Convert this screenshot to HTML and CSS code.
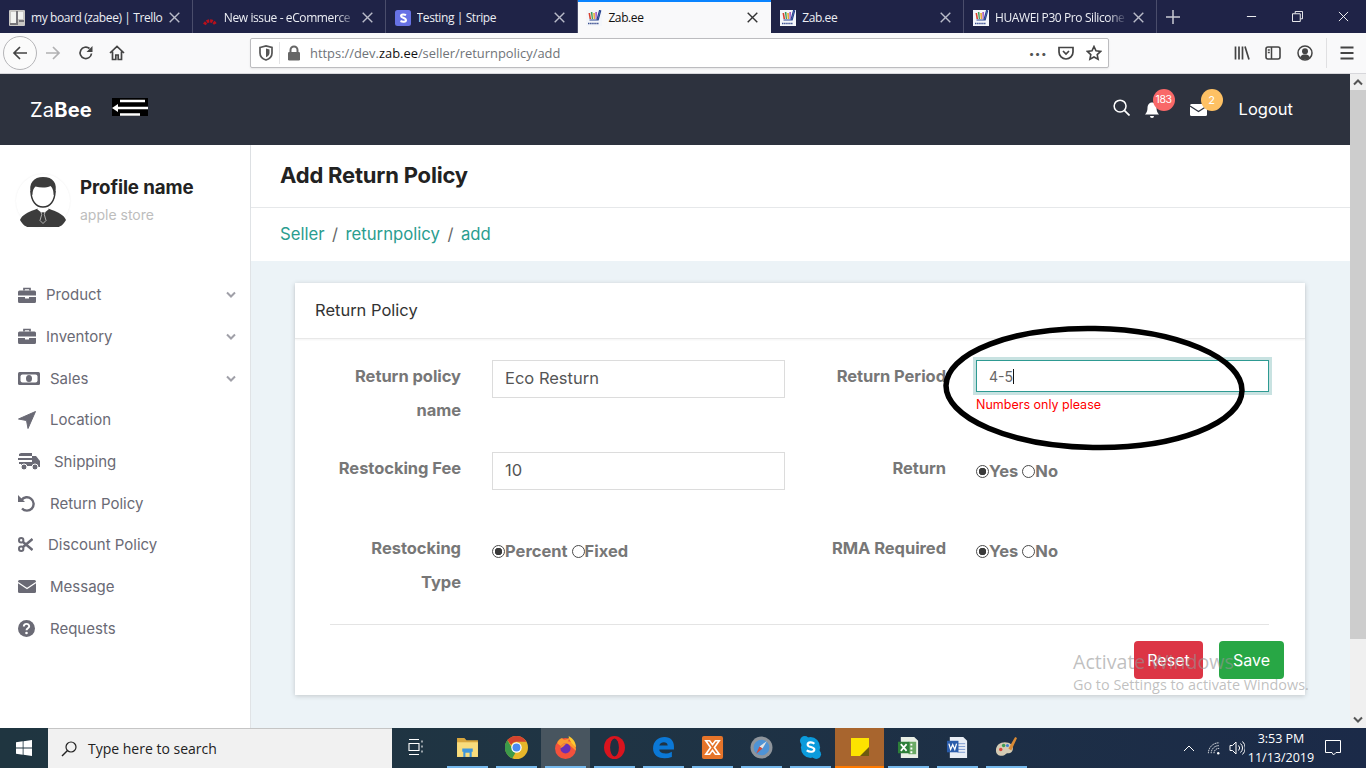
FILE: index.html
```html
<!DOCTYPE html>
<html lang="en">
<head>
<meta charset="utf-8">
<title>Zab.ee</title>
<link rel="stylesheet" href="styles.css">
</head>
<body>
<div class="screen">
  <div class="tabbar">
    <div class="tab"><svg class="fav" viewBox="0 0 16 16"><rect width="16" height="16" rx="1" fill="#c9c7c4"/><path d="M2 2h5v11H2zM9 2h5v7H9z" fill="#f2f2f0"/><path d="M7 1h2v14H7zM1 13h6v2H1zM10 10h5v2h-5z" fill="#77757a"/></svg><span class="tab-label">my board (zabee) | Trello</span><svg class="tab-x"><use href="#i-x"/></svg></div>
    <div class="tab"><svg class="fav" viewBox="0 0 16 16"><path d="M2.500 14.500A6 6 0 0 1 13.500 14.500" fill="none" stroke="#b8101c" stroke-width="3.200" stroke-dasharray="2.600 .9"/></svg><span class="tab-label tab-fade">New issue - eCommerce</span><svg class="tab-x"><use href="#i-x"/></svg></div>
    <div class="tab"><svg class="fav" viewBox="0 0 16 16"><rect width="16" height="16" rx="2.5" fill="#6772e5"/><path d="M11 5.2C9.5 4.3 6 4.2 6 6c0 2 5 1.500 5 4.200 0 1.800-3.500 1.800-5.500.8" fill="none" stroke="#fff" stroke-width="2"/></svg><span class="tab-label">Testing | Stripe</span><svg class="tab-x"><use href="#i-x"/></svg></div>
    <div class="tab tab-active"><svg class="fav" viewBox="0 0 16 16"><use href="#zabfav"/></svg><span class="tab-label">Zab.ee</span><svg class="tab-x"><use href="#i-x"/></svg></div>
    <div class="tab"><svg class="fav" viewBox="0 0 16 16"><use href="#zabfav"/></svg><span class="tab-label">Zab.ee</span><svg class="tab-x"><use href="#i-x"/></svg></div>
    <div class="tab"><svg class="fav" viewBox="0 0 16 16"><use href="#zabfav"/></svg><span class="tab-label tab-fade">HUAWEI P30 Pro Silicone Case</span><svg class="tab-x"><use href="#i-x"/></svg></div>
    <svg class="newtab" viewBox="0 0 14 14"><path d="M7 0v14M0 7h14" stroke="#c9cad4" stroke-width="1.500"/></svg>
    <div class="winctl">
      <svg viewBox="0 0 12 12"><path d="M1 6h10" stroke="#fff"/></svg>
      <svg viewBox="0 0 12 12"><path d="M3.500 2.500V.5h8v8h-2M.5 3h8.500v8.500H.5z" fill="none" stroke="#fff"/></svg>
      <svg viewBox="0 0 12 12"><path d="M1 1l10 10M11 1L1 11" stroke="#fff"/></svg>
    </div>
  </div>

  <div class="toolbar">
    <div class="backbtn"><svg viewBox="0 0 16 16"><path d="M15 8H2M8 2L2 8l6 6" class="tb-line"/></svg></div>
    <svg class="tb fwd" viewBox="0 0 16 16"><path d="M1 8h13M8 2l6 6-6 6" fill="none" stroke="#b1b1b3" stroke-width="1.700"/></svg>
    <svg class="tb reload" viewBox="0 0 16 16"><path d="M13.500 8.500A5.700 5.700 0 1 1 11.500 3.500" class="tb-line" stroke-width="2"/><path d="M14.500 1v6h-6z" fill="#444"/></svg>
    <svg class="tb home" viewBox="0 0 16 16"><path d="M1 8l7-6.500L15 8M3.500 6.500V14.500h3.300V10h2.400v4.500h3.300V6.500" class="tb-line" stroke-width="1.800"/></svg>
    <div class="urlbar">
      <svg class="ub shield" viewBox="0 0 14 16"><path d="M1 2.500L7 1l6 1.500V8c0 3.500-3 6-6 7-3-1-6-3.500-6-7z" fill="none" stroke="#555" stroke-width="1.700"/><path d="M7 3.500l3.500 1V8c0 1.800-1.500 3.300-3.500 4.300z" fill="#555"/></svg>
      <span class="ub-sep"></span>
      <svg class="ub lock" viewBox="0 0 14 16"><path d="M3.500 7V5a3.500 3.500 0 0 1 7 0v2" fill="none" stroke="#666" stroke-width="2"/><rect x="1" y="7" width="12" height="8.500" rx="1.200" fill="#666"/></svg>
      <span class="url">https://dev.<b>zab.ee</b>/seller/returnpolicy/add</span>
      <span class="dots">•••</span>
      <svg class="ub pocket" viewBox="0 0 16 16"><path d="M1 2.500h14V7A7 7 0 0 1 1 7z" fill="none" stroke="#444" stroke-width="1.700"/><path d="M5 6l3 3 3-3" fill="none" stroke="#444" stroke-width="1.700"/></svg>
      <svg class="ub star" viewBox="0 0 16 16"><path d="M8 1.500l2 4.300 4.700.6-3.500 3.200.9 4.700L8 12l-4.100 2.300.9-4.700L1.300 6.400 6 5.800z" fill="none" stroke="#444" stroke-width="1.600"/></svg>
    </div>
    <svg class="tb lib" viewBox="0 0 16 16"><path d="M1.500 1.500v13M5 1.500v13M8.500 1.500v13M11 1.500l4 13" stroke="#444" stroke-width="1.700" fill="none"/></svg>
    <svg class="tb side" viewBox="0 0 16 16"><rect x="1" y="2" width="14" height="12" rx="2" fill="none" stroke="#444" stroke-width="1.600"/><path d="M6.500 2v12M2.800 5h2M2.800 7.500h2" stroke="#444" stroke-width="1.500"/></svg>
    <svg class="tb acct" viewBox="0 0 16 16"><circle cx="8" cy="8" r="7" fill="none" stroke="#444" stroke-width="1.500"/><circle cx="8" cy="6.300" r="3" fill="#444"/><path d="M3 12.500c1-2.500 3-3 5-3s4 .5 5 3a7 7 0 0 1-10 0z" fill="#444"/></svg>
    <span class="tb-sep"></span>
    <svg class="tb menu" viewBox="0 0 16 16"><path d="M1.500 2.500h13M1.500 8h13M1.500 13.500h13" stroke="#444" stroke-width="1.800"/></svg>
  </div>

  <div class="viewport">
    <div class="page">
      <header class="topbar">
        <div class="logo">Za<b>Bee</b></div>
        <div class="toggle"><svg viewBox="0 0 36 18"><path d="M3 10h33M8 3h25M8 16.500h20" stroke="#fff" stroke-width="2.400"/><path d="M0 10l6-4v8z" fill="#fff"/></svg></div>
        <svg class="top-search" viewBox="0 0 18 18"><circle cx="7.500" cy="7.500" r="6.300" fill="none" stroke="#fff" stroke-width="1.600"/><path d="M12 12l5.500 5.500" stroke="#fff" stroke-width="1.800"/></svg>
        <div class="top-icon bell">
          <svg viewBox="0 0 16 16"><path d="M8 .5c3 0 4.500 2.500 4.500 5.500 0 3 1 5 2.500 6.500H1C2.500 11 3.500 9 3.500 6 3.500 3 5 .5 8 .5z" fill="#fff"/><path d="M6 14h4a2 2 0 0 1-4 0z" fill="#fff"/></svg>
          <span class="badge badge-red">183</span>
        </div>
        <div class="top-icon mail">
          <svg viewBox="0 0 17 12"><rect width="17" height="12" rx="1.500" fill="#fff"/><path d="M0 2l8.500 5.500L17 2" fill="none" stroke="#2d323e" stroke-width="1.200"/></svg>
          <span class="badge badge-amber">2</span>
        </div>
        <span class="logout">Logout</span>
      </header>

      <div class="below">
        <aside class="sidebar">
          <div class="profile">
            <div class="avatar">
              <svg viewBox="0 0 54 54"><path d="M4 46c2-5 8-8 14-10l5-2 4 4 4-4 5 2c6 2 12 5 14 10-3 5-6 7-8 7H12c-2 0-5-2-8-7z" fill="#3c3c3c"/><path d="M21 35l6 5 6-5-2-2h-8z" fill="#fff"/><path d="M25 38h4l-.7 2.500 1.700 6-3 3-3-3 1.700-6z" fill="#3c3c3c" stroke="#fff" stroke-width=".6"/><path d="M15 17c0 10 5 16 12 16s12-6 12-16" fill="#fff" stroke="#333" stroke-width="1.400"/><path d="M15 20c-3-11 3-17 12-17 10 0 15 6 12 17l-1.500 1c0-5-1-7-3-9-4 2-10 2-15 .5-2 2-3 4-3 8.500z" fill="#3c3c3c"/></svg>
            </div>
            <div class="who">
              <div class="who-name">Profile name</div>
              <div class="who-store">apple store</div>
            </div>
          </div>
          <nav class="nav">
            <div class="nav-item"><svg class="ni ni-case" viewBox="0 0 18 16"><use href="#i-case"/></svg><span class="t46">Product</span><svg class="chev" viewBox="0 0 10 7"><path d="M1 1.500l4 4 4-4" /></svg></div>
            <div class="nav-item"><svg class="ni ni-case" viewBox="0 0 18 16"><use href="#i-case"/></svg><span class="t46">Inventory</span><svg class="chev" viewBox="0 0 10 7"><path d="M1 1.500l4 4 4-4" /></svg></div>
            <div class="nav-item"><svg class="ni ni-cash" viewBox="0 0 22 13"><rect width="22" height="13" rx="1.500"/><rect x="2.500" y="2.500" width="17" height="8" rx="2" fill="#fff"/><ellipse cx="11" cy="6.500" rx="3" ry="3.500"/></svg><span class="t50">Sales</span><svg class="chev" viewBox="0 0 10 7"><path d="M1 1.500l4 4 4-4" /></svg></div>
            <div class="nav-item"><svg class="ni ni-arrow" viewBox="0 0 18 18"><path d="M17.500.5L10 17.500 8.500 9.500 .5 8z" stroke-linejoin="round" stroke="#6a6a75"/></svg><span class="t50">Location</span></div>
            <div class="nav-item"><svg class="ni ni-truck" viewBox="0 0 22 17"><path d="M3 0h11v3H1V1zM0 5h14v2H0zM1 9h13v2H1zM3 13h11V11H3z"/><path d="M14 3h4l4 5v6h-8z"/><circle cx="6" cy="14" r="3" stroke="#fff"/><circle cx="17" cy="14" r="3" stroke="#fff"/></svg><span class="t54">Shipping</span></div>
            <div class="nav-item"><svg class="ni ni-undo" viewBox="0 0 17 17"><path d="M3.500 5A6.700 6.700 0 1 1 4 13.500" fill="none" stroke="#6a6a75" stroke-width="2.400"/><path d="M0 0l7 7H0z"/></svg><span class="t50">Return Policy</span></div>
            <div class="nav-item"><svg class="ni ni-cut" viewBox="0 0 15 15"><circle cx="3.200" cy="3.200" r="2.200" fill="none" stroke="#6a6a75" stroke-width="2"/><circle cx="3.200" cy="11.800" r="2.200" fill="none" stroke="#6a6a75" stroke-width="2"/><path d="M5 5l9.500 8M5 10L14.500 2" stroke="#6a6a75" stroke-width="2.400"/></svg><span class="t48">Discount Policy</span></div>
            <div class="nav-item"><svg class="ni ni-mail" viewBox="0 0 18 13"><rect width="18" height="13" rx="1.500"/><path d="M0 2.500l9 6 9-6" fill="none" stroke="#fff" stroke-width="1.200"/></svg><span class="t50">Message</span></div>
            <div class="nav-item"><svg class="ni ni-help" viewBox="0 0 17 17"><circle cx="8.500" cy="8.500" r="8.500"/><path d="M5.800 6.500c0-3.500 5.400-3.500 5.400-.2 0 2-2.700 2-2.700 4" fill="none" stroke="#fff" stroke-width="1.900"/><circle cx="8.500" cy="13" r="1.300" fill="#fff"/></svg><span class="t50">Requests</span></div>
          </nav>
        </aside>

        <main class="main">
          <div class="titlebar"><h1>Add Return Policy</h1></div>
          <div class="crumbs"><a>Seller</a><i>/</i><a>returnpolicy</a><i>/</i><a>add</a></div>
          <div class="content">
            <section class="card">
              <div class="card-head">Return Policy</div>
              <div class="form">
                <label class="lbl lbl-a">Return policy<br>name</label>
                <div class="fld"><div class="input">Eco Resturn</div></div>
                <label class="lbl lbl-b">Return Period</label>
                <div class="fld">
                  <div class="input input-focus">4-5<span class="caret"></span></div>
                  <div class="err">Numbers only please</div>
                </div>

                <label class="lbl lbl-a">Restocking Fee</label>
                <div class="fld"><div class="input">10</div></div>
                <label class="lbl lbl-b">Return</label>
                <div class="radios"><input type="radio" name="r1" checked><span class="rt">Yes</span><input class="r2" type="radio" name="r1"><span class="rt">No</span></div>

                <label class="lbl lbl-a">Restocking<br>Type</label>
                <div class="radios"><input type="radio" name="r2" checked><span class="rt">Percent</span><input class="r2" type="radio" name="r2"><span class="rt">Fixed</span></div>
                <label class="lbl lbl-b">RMA Required</label>
                <div class="radios"><input type="radio" name="r3" checked><span class="rt">Yes</span><input class="r2" type="radio" name="r3"><span class="rt">No</span></div>
              </div>
              <div class="card-rule"></div>
              <div class="actions"><button class="btn btn-reset">Reset</button><button class="btn btn-save">Save</button></div>
            </section>
          </div>
        </main>
      </div>
    </div>
    <div class="scrollbar">
      <svg class="sb-arrow" viewBox="0 0 10 7"><path d="M1 5.500l4-4 4 4"/></svg>
      <div class="sb-thumb"></div>
      <svg class="sb-arrow sb-bottom" viewBox="0 0 10 7"><path d="M1 1.500l4 4 4-4"/></svg>
    </div>
    <svg class="scribble" viewBox="0 0 310 132"><ellipse cx="155" cy="66" rx="148" ry="59.500" transform="rotate(1 155 66)" fill="none" stroke="#000" stroke-width="5.500"/></svg>
    <div class="watermark"><div class="wm-1">Activate Windows</div><div class="wm-2">Go to Settings to activate Windows.</div></div>
  </div>

  <footer class="taskbar">
    <div class="start"><svg viewBox="0 0 16 16"><path d="M0 2.300l6.700-1v6.300H0zM7.500 1.200L16 0v7.600H7.500zM0 8.400h6.700v6.300l-6.700-1zM7.500 8.400H16V16l-8.500-1.200z" fill="#fff"/></svg></div>
    <div class="search"><svg viewBox="0 0 16 16"><circle cx="10" cy="6" r="5" fill="none" stroke="#222" stroke-width="1.200"/><path d="M6.500 9.500L1 15" stroke="#222" stroke-width="1.400"/></svg><span>Type here to search</span></div>
    <div class="tk tk-view"><svg viewBox="0 0 16 16"><path d="M1 .5h10M1 15.500h10M1 4.500h10v7H1zM14 1.500v2M14 6.500v2M14 11.500v2" fill="none" stroke="#fff" stroke-width="1.100"/></svg></div>
    <div class="tk on"><svg viewBox="0 0 22 22"><path d="M1 2h7l2 2h11v16H1z" fill="#d9a73e"/><path d="M1 6h20v14H1z" fill="#f9dc7c"/><path d="M6 12h10v3h-1v5h-8v-5H6z" fill="#3f96dc"/><path d="M9 16h4v4H9z" fill="#f9dc7c"/></svg></div>
    <div class="tk on"><svg viewBox="0 0 22 22"><circle cx="11" cy="11" r="11" fill="#e7b62a"/><path d="M11 0a11 11 0 0 1 9.500 5.500H11A5.500 5.500 0 0 0 6 8.500L2.300 4A11 11 0 0 1 11 0z" fill="#d4432f"/><path d="M2.300 4L7 12a5 5 0 0 0 3 4l-3 5.300A11 11 0 0 1 2.300 4z" fill="#3c9a4a"/><circle cx="11" cy="11" r="5" fill="#fff"/><circle cx="11" cy="11" r="3.800" fill="#4b8bf0"/></svg></div>
    <div class="tk on tk-active"><svg viewBox="0 0 22 22"><circle cx="11" cy="12" r="10" fill="#f4513c"/><path d="M3 7c1-3 3-5 5-5 0 2 4 2 6 0 0 0 1 2-1 3 5 0 8 4 8 9L14 8 7 10z" fill="#fc9a2f"/><path d="M14 0c4 2 7 6 7 11l-4-4c-1-2-3-4-3-7z" fill="#ffc92f"/><circle cx="11" cy="12" r="4.800" fill="#6a2fb5"/><path d="M6 12a5 5 0 0 1 6-5l-3 3z" fill="#f98a2e"/></svg></div>
    <div class="tk on"><svg viewBox="0 0 22 22"><ellipse cx="11" cy="11" rx="10" ry="11" fill="#d9141e"/><ellipse cx="11" cy="11" rx="4.200" ry="8.500" fill="#1f3040"/></svg></div>
    <div class="tk on"><svg viewBox="0 0 22 22"><path d="M1 12C1 5 6 1 12 1c6 0 9 4 9 9v3H7c0 4 7 5 12 2v5c-8 3-18 1-18-8zM7 9h8c0-4-7-4-8 0z" fill="#0b78d6"/></svg></div>
    <div class="tk on"><svg viewBox="0 0 22 24"><rect width="22" height="24" rx="2" fill="#e5742a"/><path d="M4 5l5 7-5 7h4l3-4 3 4h4l-5-7 5-7h-4l-3 4-3-4z" fill="none" stroke="#fff" stroke-width="1.700"/></svg></div>
    <div class="tk on"><svg viewBox="0 0 22 22"><circle cx="11" cy="11" r="10.500" fill="#8f959c"/><circle cx="11" cy="11" r="7.500" fill="#4e93d6"/><path d="M16 5l-7 5 3 2z" fill="#e4e4e4"/><path d="M6 17l3-7 3 2z" fill="#d44a3a"/></svg></div>
    <div class="tk on"><svg viewBox="0 0 22 24"><ellipse cx="11" cy="12" rx="10" ry="11" fill="#0b9bdc"/><circle cx="5" cy="5" r="5" fill="#0b9bdc"/><circle cx="17" cy="19" r="5" fill="#0b9bdc"/><path d="M15 8c-2-2-7-2-7 1 0 3 7 2 7 5 0 3-5 3-8 1" fill="none" stroke="#fff" stroke-width="2.200"/></svg></div>
    <div class="tk on tk-sticky"><svg viewBox="0 0 18 18"><path d="M0 0h18v18H0z" fill="#fde300"/><path d="M9 18l9-9v9z" fill="#6d5a10"/></svg></div>
    <div class="tk on"><svg viewBox="0 0 24 24"><path d="M4 1h14l4 4v18H4z" fill="#e9efe6"/><path d="M12 6h8v13h-8z" fill="#6aaa64"/><path d="M14 8h2v2h-2zM14 12h2v2h-2zM14 16h2v2h-2z" fill="#fff"/><rect x="1" y="6" width="12" height="12" fill="#2d7f39"/><path d="M4 8.500l6 7M10 8.500l-6 7" stroke="#fff" stroke-width="1.800"/></svg></div>
    <div class="tk on"><svg viewBox="0 0 24 24"><path d="M4 1h14l4 4v18H4z" fill="#e8edf5"/><path d="M12 8h8M12 11h8M12 14h8M12 17h8" stroke="#7c9ad0"/><rect x="1" y="5" width="12" height="12" fill="#2a5cab"/><path d="M3 8l1.800 6L7 9l2.200 5L11 8" fill="none" stroke="#fff" stroke-width="1.300"/></svg></div>
    <div class="tk on"><svg viewBox="0 0 24 24"><path d="M1 15C1 8 8 5 14 7c5 2 6 7 3 10-2 2-4 0-6 2-3 3-10 2-10-4z" fill="#d4cbb4"/><circle cx="6" cy="14" r="1.800" fill="#d8443a"/><circle cx="9" cy="10" r="1.800" fill="#3f9d52"/><circle cx="13" cy="10" r="1.600" fill="#3f7fd0"/><path d="M14 13L21 1l2 1-6 13z" fill="#d98a35"/></svg></div>
    <div class="tray">
      <svg class="tr-up" viewBox="0 0 12 7"><path d="M1 6l5-5 5 5" fill="none" stroke="#fff"/></svg>
      <svg class="tr-wifi" viewBox="0 0 16 16"><path d="M1.500 13A11 11 0 0 1 13 2M4.500 13A8 8 0 0 1 13 5M7.500 13A5 5 0 0 1 13 8" fill="none" stroke="#fff" stroke-dasharray="1.500 .7"/><circle cx="12" cy="13" r="1.300" fill="#fff"/></svg>
      <svg class="tr-vol" viewBox="0 0 16 16"><path d="M1 5.500h2.500L7 2v12L3.500 10.500H1z" fill="none" stroke="#fff"/><path d="M9.500 5.500a3.500 3.500 0 0 1 0 5M11.500 3.500a6 6 0 0 1 0 9M13.500 1.500a9 9 0 0 1 0 13" fill="none" stroke="#fff"/></svg>
      <div class="clock"><div>3:53 PM</div><div>11/13/2019</div></div>
      <svg class="tr-note" viewBox="0 0 16 16"><path d="M.5.5h15v12H11L8.500 15 7 12.500H.5z" fill="none" stroke="#fff"/></svg>
    </div>
  </footer>
</div>
<svg class="defs" aria-hidden="true">
  <symbol id="zabfav" viewBox="0 0 16 16"><rect width="16" height="16" fill="#f4f6fa"/><path d="M2.500 3h1.600l1 6H3.500z" fill="#d8402f"/><path d="M4.800 2h1.600l.6 7H5.800z" fill="#3e9e55"/><path d="M7.200 3h1.600l.2 6H7.700z" fill="#e8a72a"/><path d="M9.400 2h1.500L10.500 9H9.600z" fill="#9a3fb5"/><path d="M11 9.500L13.500 .5l1.200.3L12.200 10H3.500" fill="none" stroke="#24408f" stroke-width="1.100"/><path d="M2 13.500h11" stroke="#3a4f90" stroke-width="1.700" stroke-dasharray="1.500 .6"/></symbol>
  <symbol id="i-case" viewBox="0 0 18 16"><path d="M6 3.500V1.500h6v2" fill="none" stroke="#6a6a75" stroke-width="1.700"/><path d="M1.500 3.500h15A1.500 1.500 0 0 1 18 5v3.500H0V5a1.500 1.500 0 0 1 1.500-1.500zM0 10h7v1.500h4V10h7v4.500a1.500 1.500 0 0 1-1.500 1.500h-15A1.500 1.500 0 0 1 0 14.500z"/></symbol>
  <symbol id="i-x" viewBox="0 0 11 11"><path d="M.7.700l9.600 9.600M10.300.7L.7 10.300" fill="none" stroke="currentColor" stroke-width="1.400"/></symbol>
</svg>
</body>
</html>
```
FILE: styles.css
```css
* { box-sizing: border-box; }
html, body { margin: 0; height: 100%; overflow: hidden; }
body { font-family: "Inter", "Liberation Sans", sans-serif; color: #333; background: #fff; }
.defs { width: 0; height: 0; position: absolute; }
.screen { width: 1366px; height: 768px; display: flex; flex-direction: column; }

/* tab strip */
.tabbar { flex: none; height: 33px; background: #1f2347; display: flex; align-items: stretch; font-family: "Open Sans", "Liberation Sans", sans-serif; font-size: 12px; letter-spacing: -.4px; color: #eceef4; }
.tab { width: 192.800px; flex: none; display: flex; align-items: center; padding: 2px 12px 0 9px; border-right: 1px solid #4a4d6b; position: relative; }
.tab-active { background: #f9f9fa; color: #111; border-right: 0; padding-left: 8px; padding-right: 13px; }
.tab-active::before { content: ""; position: absolute; left: 0; right: 0; top: 0; height: 2px; background: #0a84ff; }
.fav { width: 16px; height: 16px; flex: none; margin-right: 6px; }
.tab-label { flex: 1; white-space: nowrap; overflow: hidden; min-width: 0; }
.tab-fade { -webkit-mask-image: linear-gradient(90deg, #000 86%, transparent 100%); mask-image: linear-gradient(90deg, #000 86%, transparent 100%); }
.tab-x { flex: none; width: 11px; height: 11px; color: #b9bbc9; margin-left: 6px; }
.tab-active .tab-x { color: #333; }
.newtab { width: 14px; height: 14px; flex: none; align-self: center; margin-left: 9px; }
.winctl { margin-left: auto; display: flex; align-items: center; gap: 35px; padding-right: 17px; }
.winctl svg { width: 11px; height: 11px; display: block; }

/* toolbar */
.toolbar { flex: none; height: 41px; background: #f9f9fa; border-bottom: 1px solid #d7d7db; display: flex; align-items: center; padding: 0 11px 1px 3px; }
.backbtn { width: 34px; height: 34px; border: 1px solid #b5b5b8; border-radius: 50%; background: #fbfbfb; display: flex; align-items: center; justify-content: center; flex: none; }
.backbtn svg { width: 16px; height: 16px; }
.tb-line { fill: none; stroke: #444; stroke-width: 1.700; }
.tb { width: 16px; height: 16px; flex: none; }
.fwd { margin-left: 8px; }
.reload { margin-left: 17px; }
.home { margin-left: 15px; }
.urlbar { width: 859px; height: 30px; flex: none; margin-left: 125px; background: #fff; border: 1px solid #bcbcbf; border-radius: 2px; display: flex; align-items: center; padding-left: 8px; box-shadow: 0 1px 2px rgba(0,0,0,.08); }
.ub { flex: none; width: 14px; height: 16px; }
.ub-sep { width: 1px; height: 22px; background: #e3e3e5; margin: 0 7px 0 6px; }
.url { font-family: "Open Sans", "Liberation Sans", sans-serif; font-size: 12.900px; color: #6f7378; flex: none; margin-left: 9px; margin-top: 1px; }
.url b { font-weight: 400; color: #111; }
.dots { margin-left: auto; font-size: 10px; color: #555; letter-spacing: .5px; }
.pocket { width: 16px; margin-left: 11px; }
.star { width: 16px; margin-left: 12px; margin-right: 6px; }
.lib { margin-left: 125px; }
.side { margin-left: 15px; }
.acct { margin-left: 16px; }
.tb-sep { width: 1px; height: 30px; background: #e0e0e2; margin-left: 13px; }
.menu { margin-left: 12px; }

/* page viewport */
.viewport { flex: 1; min-height: 0; display: flex; position: relative; }
.page { flex: 1; min-width: 0; display: flex; flex-direction: column; }
.topbar { height: 71px; flex: none; background: #2d323e; color: #fff; display: flex; align-items: center; padding: 0 57px 0 30px; }
.logo { font-size: 20px; font-weight: 400; width: 82px; letter-spacing: .2px; }
.logo b { font-weight: 700; }
.toggle { width: 36px; height: 18px; background: #000; flex: none; margin-bottom: 5px; }
.toggle svg { width: 36px; height: 18px; display: block; }
.top-search { width: 17px; height: 17px; flex: none; margin-left: auto; margin-bottom: 4px; }
.top-icon { position: relative; flex: none; }
.top-icon svg { display: block; }
.bell { margin-left: 14px; }
.bell svg { width: 16px; height: 16px; }
.mail { margin-left: 30px; }
.mail svg { width: 17px; height: 12px; }
.badge { position: absolute; width: 22px; height: 22px; border-radius: 50%; color: #fff; font-size: 11px; text-align: center; line-height: 22px; }
.bell .badge { left: 9px; top: -13px; font-size: 10.500px; letter-spacing: -.3px; }
.mail .badge { left: 11px; top: -15px; }
.badge-red { background: #f96868; }
.badge-amber { background: #fec164; }
.logout { margin: 0 0 2px 32px; font-size: 16.500px; }

.below { flex: 1; min-height: 0; display: flex; }
.sidebar { width: 251px; flex: none; background: #fff; border-right: 1px solid #e0e3e6; padding-top: 29px; }
.profile { display: flex; align-items: flex-start; padding-left: 16px; }
.avatar { width: 54px; height: 54px; border-radius: 50%; box-shadow: 0 0 2px rgba(0,0,0,.08); flex: none; }
.avatar svg { width: 54px; height: 54px; display: block; }
.who { margin-left: 10px; }
.who-name { font-size: 18.700px; font-weight: 700; color: #222; line-height: 27px; letter-spacing: -.1px; }
.who-store { font-size: 14px; color: #bdbdbd; line-height: 20px; margin-top: 4px; }
.nav { margin-top: 45.900px; }
.nav-item { height: 41.700px; padding: 0 14px 0 18px; display: flex; align-items: center; font-size: 15px; color: #6a6a75; position: relative; }
.ni { flex: none; fill: #6a6a75; display: block; }
.ni-case { width: 18px; height: 16px; }
.ni-cash { width: 22px; height: 13px; }
.ni-arrow { width: 18px; height: 18px; }
.ni-truck { width: 22px; height: 17px; }
.ni-undo { width: 17px; height: 17px; }
.ni-cut { width: 15px; height: 15px; }
.ni-mail { width: 18px; height: 13px; }
.ni-help { width: 17px; height: 17px; }
.t46 { margin-left: 10px; }
.ni-cash + .t50 { margin-left: 10px; }
.ni-arrow + .t50 { margin-left: 14px; }
.ni-undo + .t50 { margin-left: 15px; }
.ni-mail + .t50 { margin-left: 14px; }
.ni-help + .t50 { margin-left: 15px; }
.ni-truck + .t54 { margin-left: 14px; }
.ni-cut + .t48 { margin-left: 15px; }
.chev { width: 10px; height: 7px; margin-left: auto; fill: none; stroke: #a0a0a8; stroke-width: 2; }

.main { flex: 1; min-width: 0; display: flex; flex-direction: column; background: #ecf3f7; }
.titlebar { height: 63px; flex: none; background: #fff; border-bottom: 1px solid #e6e8ea; box-shadow: 0 1px 2px rgba(0,0,0,.04); padding-left: 29px; display: flex; align-items: center; }
.titlebar h1 { margin: 0 0 2px; font-size: 22px; font-weight: 700; color: #222; letter-spacing: -.2px; }
.crumbs { height: 53px; flex: none; background: #fff; padding: 0 0 2px 29px; display: flex; align-items: center; font-size: 16.700px; color: #2a9d8f; }
.crumbs i { font-style: normal; margin: 0 7.500px; color: #666; }
.content { flex: 1; min-height: 0; padding: 22px 45px 0 44px; }
.card { background: #fff; box-shadow: 0 1px 5px rgba(0,0,0,.18); height: 412px; }
.card-head { height: 56px; padding: 0 20px 2px; display: flex; align-items: center; font-size: 16.500px; color: #333; border-bottom: 1px solid #e8e8e8; box-shadow: 0 1px 2px rgba(0,0,0,.05); }
.form { display: grid; grid-template-columns: 162px 293px 191px 293px; grid-template-rows: 92px 80px 68px; margin: 20px 0 0 35px; }
.lbl { font-size: 16.500px; font-weight: 700; line-height: 34px; color: #777; text-align: right; letter-spacing: -.05px; }
.lbl-a { padding-right: 31px; }
.lbl-b { padding-right: 30px; }
.fld { padding-top: 1px; }
.input { height: 38px; border: 1px solid #dcdcdc; padding: 0 12px 2px; display: flex; align-items: center; font-size: 16.500px; color: #555; }
.input-focus { height: 32px; font-size: 14px; padding-bottom: 0; color: #666; border-color: #2e9a92; box-shadow: 0 0 0 3px #c8e2e1; }
.caret { width: 1px; height: 15px; background: #111; }
.err { color: #ff0000; font-size: 12.500px; margin-top: 4px; line-height: 18px; }
.radios { display: flex; align-items: center; height: 40px; font-size: 16.500px; font-weight: 700; color: #777; }
.radios input { appearance: none; -webkit-appearance: none; width: 13px; height: 13px; margin: 0; border: 1px solid #4a4a4a; border-radius: 50%; background: #fff; flex: none; }
.radios input:checked { background: radial-gradient(circle, #3a3a3a 0 3.500px, #fff 4px); }
.radios .r2 { margin-left: 4px; }
.card-rule { height: 1px; background: #e4e4e4; margin: 25px 36px 0 35px; }
.actions { display: flex; justify-content: flex-end; gap: 16px; padding: 16px 21px 0 0; }
.btn { border: 0; height: 38px; border-radius: 4px; color: #fff; font-family: inherit; font-size: 16px; padding: 0; }
.btn-reset { width: 69px; background: #dc3545; }
.btn-save { width: 65px; background: #28a745; }

/* scrollbar */
.scrollbar { width: 16px; flex: none; background: #f0f0f0; display: flex; flex-direction: column; align-items: center; }
.sb-arrow { width: 10px; height: 7px; flex: none; fill: none; stroke: #555; stroke-width: 2; margin: 5px 0 4px; }
.sb-thumb { width: 16px; height: 549px; background: #cdcdcd; }
.sb-bottom { margin-top: auto; margin-bottom: 5px; }

.scribble { position: absolute; left: 939px; top: 248px; width: 310px; height: 132px; }
.watermark { position: absolute; left: 1073px; top: 576px; font-family: "Open Sans", "Liberation Sans", sans-serif; color: rgba(150,150,150,.6); pointer-events: none; }
.wm-1 { font-size: 19.600px; line-height: 24px; }
.wm-2 { font-size: 14.400px; line-height: 21px; }

/* taskbar */
.taskbar { flex: none; height: 40px; background: linear-gradient(90deg, #1f3540 0%, #1f3444 45%, #1b2a48 100%); display: flex; align-items: stretch; font-family: "Open Sans", "Liberation Sans", sans-serif; color: #fff; }
.start { width: 48px; flex: none; display: flex; align-items: center; justify-content: center; }
.start svg { width: 16px; height: 16px; }
.search { width: 344px; flex: none; background: #f1f1f1; display: flex; align-items: center; padding-left: 13px; color: #222; font-size: 14px; border-top: 1px solid #c5c5c5; }
.search svg { width: 16px; height: 16px; margin-right: 11px; }
.tk { width: 49px; flex: none; display: flex; align-items: center; justify-content: center; position: relative; padding-bottom: 2px; }
.tk svg { width: 23px; height: 23px; }
.tk-view { width: 51px; padding-right: 3px; }
.tk-view svg { width: 16px; height: 16px; }
.tk.on::after { content: ""; position: absolute; left: 4px; right: 4px; bottom: 0; height: 2px; background: #76b9ed; }
.tk-active { background: #48555f; }
.tk-sticky { background: #a8652e; }
.tk-sticky svg { width: 18px; height: 18px; }
.tk-sticky.on::after { left: 0; right: 0; background: #ff7a00; }
.tray { margin-left: auto; display: flex; align-items: center; padding-right: 25px; }
.tray svg { display: block; flex: none; }
.tr-up { width: 12px; height: 7px; }
.tr-wifi { width: 15px; height: 15px; margin-left: 12px; }
.tr-vol { width: 16px; height: 16px; margin-left: 7px; }
.clock { width: 72px; text-align: center; font-size: 12.500px; line-height: 19px; }
.tr-note { width: 16px; height: 16px; margin-left: 8px; }
```
